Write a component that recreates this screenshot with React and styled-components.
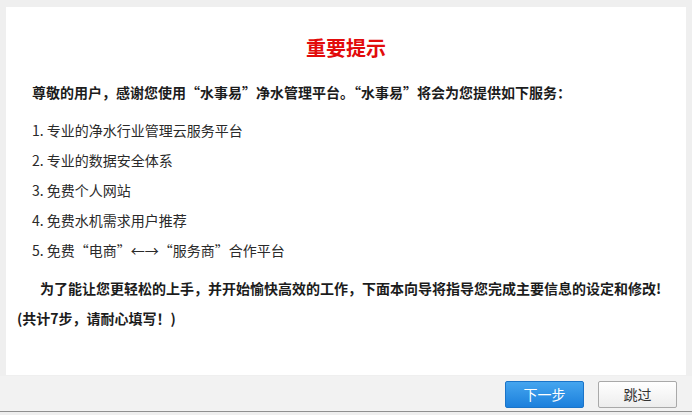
import React from "react";
import styled, { createGlobalStyle } from "styled-components";

const GlobalStyle = createGlobalStyle`
  html, body {
    margin: 0;
    padding: 0;
    background: #efefef;
  }
  body {
    font-family: "Noto Sans CJK SC", "Liberation Sans", sans-serif;
    color: #222;
  }
`;

const Page = styled.div`
  width: 692px;
  height: 415px;
  overflow: hidden;
  background: #efefef;
`;

const Body = styled.div`
  padding: 7px 6px 0 6px;
`;

const Panel = styled.div`
  height: 368px;
  background: #fff;
  padding-top: 26px;
  box-sizing: border-box;
`;

const Title = styled.h1`
  margin: 0;
  text-align: center;
  font-size: 20px;
  line-height: 30px;
  font-weight: bold;
  color: #e20b0b;
`;

const Intro = styled.p`
  margin: 14px 0 0 26px;
  font-size: 14px;
  line-height: 30px;
  font-weight: bold;
  color: #1c1c1c;
`;

const List = styled.ol`
  margin: 8px 0 0 26px;
  padding: 0;
  list-style: none;
`;

const Item = styled.li`
  font-size: 14px;
  line-height: 30px;
  color: #2a2a2a;
  white-space: nowrap;
`;

const Note = styled.div`
  margin-top: 8px;
  padding: 0 8px 0 11px;
  font-size: 14px;
  line-height: 30px;
  font-weight: bold;
  color: #1c1c1c;
  white-space: nowrap;
`;

const NoteLine = styled.div`
  padding-left: ${p => (p.$indent ? "23px" : "0")};
`;

const Footer = styled.div`
  height: 36px;
  margin-top: 1px;
  background: #f2f2f2;
  border-bottom: 1px solid #8f8f8f;
  display: flex;
  align-items: center;
  justify-content: flex-end;
  gap: 14px;
  padding-right: 15px;
  padding-top: 1px;
  box-sizing: border-box;
`;

const Button = styled.button`
  width: 79px;
  height: 27px;
  border-radius: 2px;
  font-family: "Noto Sans CJK SC", sans-serif;
  font-size: 14px;
  cursor: pointer;
  border: 1px solid ${p => (p.$primary ? "#1b74c8" : "#a9a9a9")};
  color: ${p => (p.$primary ? "#fff" : "#333")};
  background: ${p =>
    p.$primary
      ? "linear-gradient(#45a5ef, #1c80dc)"
      : "linear-gradient(#ffffff, #ededed)"};
`;

export default function App() {
  return (
    <Page>
      <GlobalStyle />
      <Body>
        <Panel>
          <Title>重要提示</Title>
          <Intro>
            尊敬的用户，感谢您使用“水事易”净水管理平台。“水事易”将会为您提供如下服务：
          </Intro>
          <List>
            <Item>1. 专业的净水行业管理云服务平台</Item>
            <Item>2. 专业的数据安全体系</Item>
            <Item>3. 免费个人网站</Item>
            <Item>4. 免费水机需求用户推荐</Item>
            <Item>5. 免费“电商”←→“服务商”合作平台</Item>
          </List>
          <Note>
            <NoteLine $indent>
              为了能让您更轻松的上手，并开始愉快高效的工作，下面本向导将指导您完成主要信息的设定和修改!
            </NoteLine>
            <NoteLine>(共计7步，请耐心填写！)</NoteLine>
          </Note>
        </Panel>
      </Body>
      <Footer>
        <Button $primary>下一步</Button>
        <Button>跳过</Button>
      </Footer>
    </Page>
  );
}
